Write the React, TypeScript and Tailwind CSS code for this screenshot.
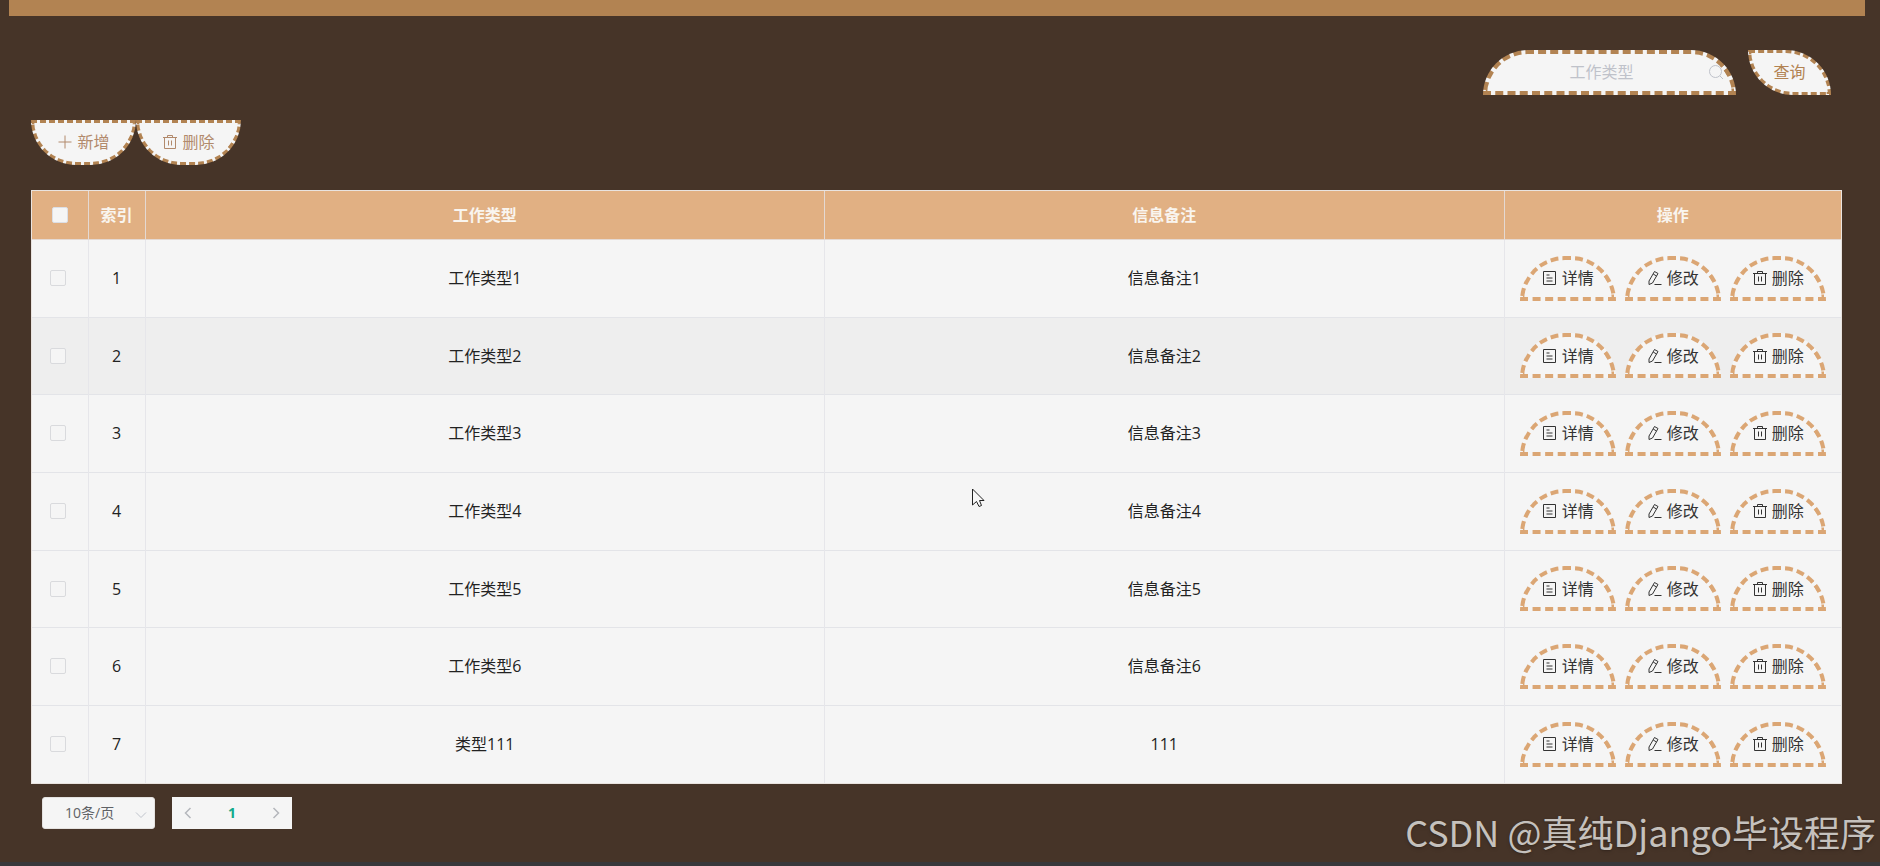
import React from "react";

const rows = [
  { id: 1, type: "工作类型1", remark: "信息备注1" },
  { id: 2, type: "工作类型2", remark: "信息备注2" },
  { id: 3, type: "工作类型3", remark: "信息备注3" },
  { id: 4, type: "工作类型4", remark: "信息备注4" },
  { id: 5, type: "工作类型5", remark: "信息备注5" },
  { id: 6, type: "工作类型6", remark: "信息备注6" },
  { id: 7, type: "类型111", remark: "111" },
];

const iconPaths = {
  plus: "M8 1.500v13M1.500 8h13",
  detail: "M1.500 1.500h12v13h-12zM4.500 5h3M4.500 8h6M4.500 11h6",
  edit: "M7.500 1.500l3.500 2-5.500 9.500-3.500 1.500V11zM6.200 4l3.300 2M7.500 14.500h7",
  trash: "M1 3.500h14M5.500 3.500v-2h5v2M2.500 3.500v11h11v-11M6.500 6.500v5M9.500 6.500v5",
  search: "M7.500 1.500a6 6 0 1 0 0 12a6 6 0 1 0 0-12M12 12l3 3",
  left: "M10.500 3L5.500 8l5 5",
  right: "M5.500 3l5 5-5 5",
  down: "M3 5.500l5 5 5-5",
};

type IconProps = { name: keyof typeof iconPaths; className?: string };

function Icon({ name, className = "size-4" }: IconProps) {
  return (
    <svg
      viewBox="0 0 16 16"
      className={`shrink-0 ${className}`}
      fill="none"
      stroke="currentColor"
      aria-hidden="true"
    >
      <path d={iconPaths[name]} />
    </svg>
  );
}

function ToolButton({ icon, label }: { icon: IconProps["name"]; label: string }) {
  return (
    <button
      type="button"
      className="flex h-[45px] w-[105px] items-center justify-center gap-1 rounded-b-[60px] border-3 border-dashed border-[#b28352] bg-[#f5f5f5] pb-0.5 text-[#b28a6c]"
    >
      <Icon name={icon} />
      {label}
    </button>
  );
}

function RowButton({ icon, label }: { icon: IconProps["name"]; label: string }) {
  return (
    <button
      type="button"
      className="flex h-[45px] w-24 items-center justify-center gap-1 rounded-t-[60px] border-4 border-dashed border-[#dba674] bg-[#f5f5f5] text-[#333]"
    >
      <Icon name={icon} />
      {label}
    </button>
  );
}

function CheckBox({ label, className }: { label: string; className: string }) {
  return (
    <input
      type="checkbox"
      aria-label={label}
      className={`block appearance-none rounded-xs border bg-[#f5f5f5] ${className}`}
    />
  );
}

function SearchBar() {
  return (
    <form className="flex justify-end gap-3 pr-[11px]">
      <div className="relative">
        <input
          type="text"
          aria-label="工作类型"
          placeholder="工作类型"
          className="h-[45px] w-[253px] rounded-t-[60px] border-4 border-dashed border-[#b28352] bg-[#f5f5f5] pr-8 pb-0.5 pl-4 text-center placeholder:text-[#bfc2ca]"
        />
        <Icon
          name="search"
          className="absolute top-3.5 right-3 size-4 text-[#bfc2ca]"
        />
      </div>
      <button
        type="button"
        className="h-[45px] w-[83px] rounded-tr-[60px] rounded-bl-[60px] border-3 border-dashed border-[#b28352] bg-[#f5f5f5] pb-0.5 text-[#b28352]"
      >
        查询
      </button>
    </form>
  );
}

function DataTable() {
  return (
    <div className="border border-[#e9e3df] bg-[#f5f5f5]">
      <table className="w-full table-fixed border-collapse text-center">
        <colgroup>
          <col className="w-14" />
          <col className="w-[57px]" />
          <col />
          <col />
          <col className="w-[337px]" />
        </colgroup>
        <thead>
          <tr className="h-12 bg-[#e1b083] text-[#f9f5ef]">
            <th className="border-r border-b border-[#e4d9d3]">
              <CheckBox label="全选" className="mx-auto size-4 border-[#dcdfe6]" />
            </th>
            <th className="border-r border-b border-[#e4d9d3]">索引</th>
            <th className="border-r border-b border-[#e4d9d3]">工作类型</th>
            <th className="border-r border-b border-[#e4d9d3]">信息备注</th>
            <th className="border-b border-[#e4d9d3]">操作</th>
          </tr>
        </thead>
        <tbody>
          {rows.map((row) => (
            <tr
              key={row.id}
              className="h-[78px] border-b border-[#e3e4e8] text-[#222] last:border-b-0 nth-[3n+2]:h-[77px] nth-2:bg-[#eee]"
            >
              <td className="border-r border-[#e6e6ea] pr-1">
                <CheckBox label={`选择第${row.id}行`} className="mx-auto size-4 border-[#d9dadd]" />
              </td>
              <td className="border-r border-[#e6e6ea]">{row.id}</td>
              <td className="border-r border-[#e6e6ea]">{row.type}</td>
              <td className="border-r border-[#e6e6ea]">{row.remark}</td>
              <td>
                <div className="flex justify-center gap-[9px]">
                  <RowButton icon="detail" label="详情" />
                  <RowButton icon="edit" label="修改" />
                  <RowButton icon="trash" label="删除" />
                </div>
              </td>
            </tr>
          ))}
        </tbody>
      </table>
    </div>
  );
}

function Pagination() {
  return (
    <nav aria-label="分页" className="mt-[13px] ml-[11px] flex gap-[17px]">
      <div className="relative">
        <select
          aria-label="每页条数"
          className="block h-8 w-[113px] appearance-none rounded-[3px] border border-[#e4e2e0] bg-[#f5f5f5] pl-[22px] text-sm text-[#606266]"
        >
          <option>10条/页</option>
        </select>
        <Icon
          name="down"
          className="pointer-events-none absolute top-2.5 right-1.5 size-4 text-[#c0c4cc]"
        />
      </div>
      <div className="flex h-8 w-[120px] items-center justify-between bg-[#f5f5f5] px-2 text-[#b5b7bc]">
        <button type="button" aria-label="上一页">
          <Icon name="left" className="size-4 stroke-[1.5]" />
        </button>
        <button type="button" className="text-sm font-bold text-[#13a98b]">
          1
        </button>
        <button type="button" aria-label="下一页">
          <Icon name="right" className="size-4 stroke-[1.5]" />
        </button>
      </div>
    </nav>
  );
}

export default function App() {
  return (
    <div className="relative flex min-h-screen flex-col bg-[#463428] font-['Open_Sans','Noto_Sans_CJK_SC',sans-serif] text-base">
      <header className="mr-[15px] ml-[9px] h-4 bg-[#b28352]" />
      <main className="pt-[34px] pr-[38px] pl-[31px]">
        <SearchBar />
        <div className="mt-[25px] mb-[25px] flex">
          <ToolButton icon="plus" label="新增" />
          <ToolButton icon="trash" label="删除" />
        </div>
        <DataTable />
        <Pagination />
      </main>
      <footer className="mt-auto h-1 bg-[#38383b]" />
      <svg
        viewBox="0 0 13 20"
        className="absolute top-[488px] left-[972px] h-5 w-[13px]"
        fill="#f8f8f8"
        stroke="#222"
        aria-hidden="true"
      >
        <path d="M.5 1v16l4-3.500 2.500 5 2.500-1-2-5h4.500z" />
      </svg>
      <p className="absolute right-1 bottom-2 font-['Noto_Sans_CJK_SC',sans-serif] text-[36px] leading-[54px] text-[#c5c1bd] text-shadow-md">
        CSDN @真纯Django毕设程序
      </p>
    </div>
  );
}
